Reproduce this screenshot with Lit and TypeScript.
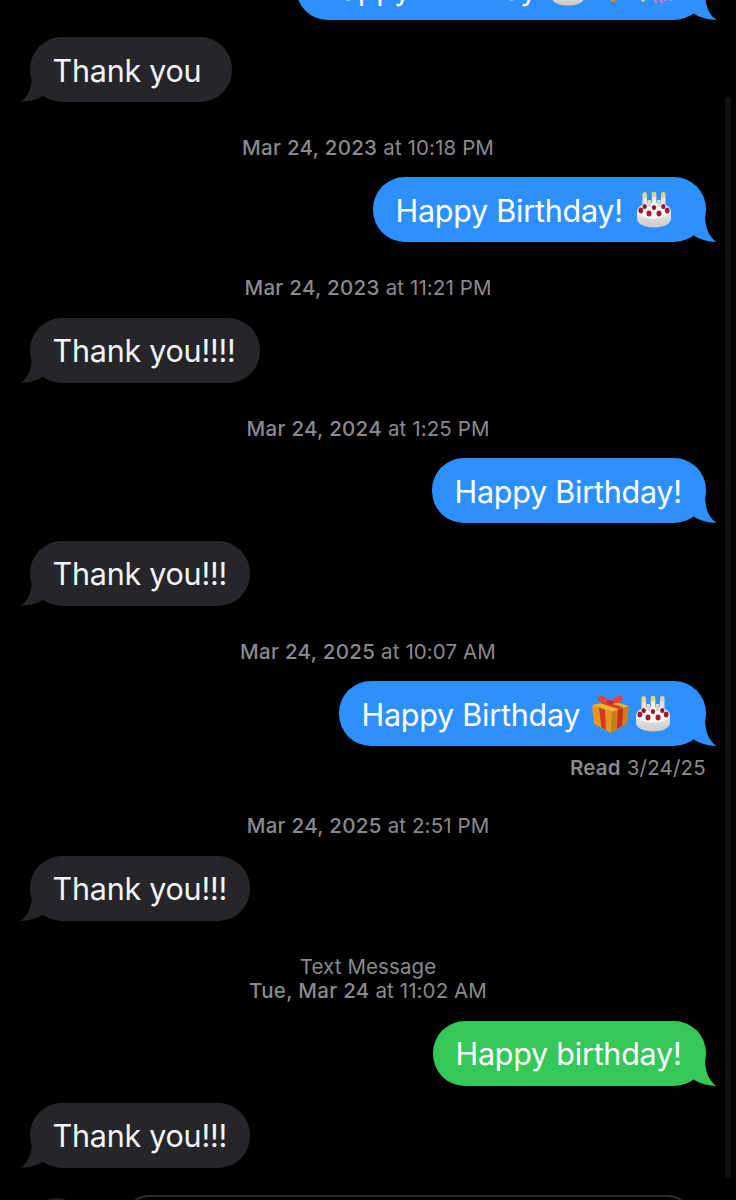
import { LitElement, html, css, svg } from "lit";
import { customElement } from "lit/decorators.js";

const cake = html`<svg class="emoji cake" viewBox="0 0 36 36" width="36" height="36">
  <defs>
    <linearGradient id="ck" x1="0" y1="0" x2="0" y2="1"><stop offset="0" stop-color="#fbf8f4"/><stop offset="1" stop-color="#cfcac5"/></linearGradient>
  </defs>
  <rect x="6.500" y="4" width="4.500" height="14" rx="1" fill="#e9e3da"/>
  <rect x="15.800" y="3" width="4.500" height="14" rx="1" fill="#f4efe8"/>
  <rect x="25" y="4" width="4.500" height="14" rx="1" fill="#e9e3da"/>
  <ellipse cx="8.700" cy="3" rx="2.300" ry="3" fill="#e3d27e"/>
  <ellipse cx="18" cy="2.400" rx="2.300" ry="2.800" fill="#e3d27e"/>
  <ellipse cx="27.300" cy="3" rx="2.300" ry="3" fill="#e3d27e"/>
  <path d="M1 20c0-6 7-9 17-9s17 3 17 9v6c0 6-7 9.500-17 9.500S1 32 1 26z" fill="url(#ck)"/>
  <ellipse cx="18" cy="19" rx="16.500" ry="7.500" fill="#fdfbf8"/>
  <rect x="11.500" y="8" width="3.500" height="7" fill="#ddd6cc"/><rect x="21" y="8" width="3.500" height="7" fill="#ddd6cc"/>
  <ellipse cx="4.800" cy="18.500" rx="2.400" ry="2.900" fill="#a01c36"/><ellipse cx="13" cy="21.500" rx="2.500" ry="3" fill="#a01c36"/><ellipse cx="23" cy="21.500" rx="2.500" ry="3" fill="#a01c36"/><ellipse cx="31.200" cy="18.500" rx="2.400" ry="2.900" fill="#a01c36"/>
  <ellipse cx="8.700" cy="14.500" rx="2.200" ry="2.600" fill="#8f1630"/><ellipse cx="18" cy="15.500" rx="2.200" ry="2.600" fill="#8f1630"/><ellipse cx="27.300" cy="14.500" rx="2.200" ry="2.600" fill="#8f1630"/>
</svg>`;

const gift = html`<svg class="emoji gift" viewBox="0 0 40 40" width="40" height="40">
  <path d="M2 11 21 7 39 12 22 18z" fill="#f0b52e"/>
  <path d="M2 11 22 18 21 39 4 30z" fill="#e39a1c"/>
  <path d="M22 18 39 12 37 30 21 39z" fill="#c97f14"/>
  <path d="M9 13.500 11.500 33.500 16 36 15 15.800z" fill="#d8352a"/>
  <path d="M28 15.200 33 13.500 32 32 27 35z" fill="#c92c22"/>
  <path d="M10 9 28 15 33 13 15 7.800z" fill="#e03a30"/>
  <path d="M20 8C15 1 8 0 8 4c0 4 6 6 12 5 6 1 13-1 13-5s-8-3-13 4z" fill="#e8423a"/>
  <path d="M16 8l4 4 5-4-5-2z" fill="#c92c22"/>
</svg>`;

const confetti = html`<svg class="emoji confetti" viewBox="0 0 36 36" width="36" height="36">
  <circle cx="18" cy="10" r="10" fill="#e8b83a"/>
  <path d="M3 29l0 1" stroke="#c9ef5a" stroke-width="3.500" stroke-linecap="round"/>
  <path d="M12 20l4 12M16 24l6 8" stroke="#f06fb8" stroke-width="2.200" stroke-linecap="round"/>
  <path d="M8 22l2 4" stroke="#8fd0ff" stroke-width="1.800" stroke-linecap="round"/>
  <path d="M25 22l0 8M31 24l0 6" stroke="#e887c8" stroke-width="1.800" stroke-linecap="round"/>
  <circle cx="29" cy="29" r="1.300" fill="#f4c95a"/>
</svg>`;

const tailPath = svg`<path d="M16 4C16 16 20 26 27.500 31C20 30.500 11 29 4 24L0 20L8 4Z" fill="currentColor"/>`;
const tail = (side: string) => html`<svg class="tail ${side}" viewBox="0 0 28 31" width="28" height="31">${tailPath}</svg>`;

type Row =
  | { k: "in"; t: string; w: number }
  | { k: "out"; t: string; w: number; c?: string; e?: unknown[]; cls?: string }
  | { k: "ts"; d: string; r: string; cls?: string }
  | { k: "two"; d: string; r: string }
  | { k: "read" };

const rows: Row[] = [
  { k: "out", t: "Happy Birthday", w: 410, e: [cake, gift, confetti], cls: "first" },
  { k: "in", t: "Thank you", w: 202 },
  { k: "ts", d: "Mar 24, 2023", r: "at 10:18 PM" },
  { k: "out", t: "Happy Birthday!", w: 333, e: [cake] },
  { k: "ts", d: "Mar 24, 2023", r: "at 11:21 PM" },
  { k: "in", t: "Thank you!!!!", w: 230 },
  { k: "ts", d: "Mar 24, 2024", r: "at 1:25 PM" },
  { k: "out", t: "Happy Birthday!", w: 274 },
  { k: "in", t: "Thank you!!!", w: 220 },
  { k: "ts", d: "Mar 24, 2025", r: "at 10:07 AM" },
  { k: "out", t: "Happy Birthday", w: 367, e: [gift, cake] },
  { k: "read" },
  { k: "ts", d: "Mar 24, 2025", r: "at 2:51 PM", cls: "after-read" },
  { k: "in", t: "Thank you!!!", w: 220 },
  { k: "two", d: "Tue, Mar 24", r: "at 11:02 AM" },
  { k: "out", t: "Happy birthday!", w: 273, c: "green" },
  { k: "in", t: "Thank you!!!", w: 220 },
];

@customElement("app-root")
export class AppRoot extends LitElement {
  static styles = css`
    :host { display: block; width: 736px; height: 1200px; overflow: hidden; background: #000; position: relative;
      font-family: Inter, "Liberation Sans", sans-serif; }
    .col { display: flex; flex-direction: column; }
    .bubble { position: relative; height: 65px; box-sizing: border-box; border-radius: 32px; display: flex; align-items: center;
      padding-left: 22.500px; padding-top: 1px; font-size: 30.5px; letter-spacing: -0.24px; color: #fff; white-space: nowrap; flex: none; }
    .in { align-self: flex-start; margin-left: 30px; background: #26262a; color: #f4f4f6; margin-top: 17.6px; }
    .out { align-self: flex-end; margin-right: 30px; background: #2e90ff; color: #fff; margin-top: 0; }
    .out.green { background: #35c759; }
    .in .tail { color: #26262a; }
    .out .tail { color: #2e90ff; }
    .out.green .tail { color: #35c759; }
    .first { margin-top: -45px; }
    .first + .in { margin-top: 17px; }
    .green + .in { margin-top: 17px; }
    .in + .out { margin-top: 17.6px; }
    .tail { position: absolute; bottom: 0; }
    .tail.r { right: -11px; }
    .tail.l { left: -10px; transform: scaleX(-1); }
    .emoji { flex: none; display: block; }
    .cake { margin-left: 13px; }
    .gift { margin-left: 10px; margin-right: -4px; }
    .gift + .cake { margin-left: 9px; }
    .first .gift { margin-left: 12px; margin-right: 0; width: 30px; height: 30px; }
    .first .confetti { margin-left: 12px; }
    .ts { height: 30px; margin: 30.6px 0 14.8px; display: flex; justify-content: center; align-items: center; gap: 6px;
      font-size: 20.5px; letter-spacing: 0.1px; color: #8a8a8e; white-space: nowrap; }
    .ts.after-read { margin: 32px 0 15px; }
    .ts b, .two b { font-weight: 500; letter-spacing: 0.3px; }
    .ts span, .two span { font-weight: 400; }
    .ts + .in { margin-top: 0; }
    .two { margin: 34px 0 18px; font-size: 20.5px; letter-spacing: 0.1px; color: #8a8a8e; line-height: 24px; text-align: center; white-space: nowrap; }
    .read { height: 22px; margin: 10.800px 30px 0 0; align-self: flex-end; font-size: 20.5px; color: #8a8a8e; letter-spacing: 0.2px; line-height: 22px; white-space: nowrap; }
    .read b { font-weight: 600; }
    .composer { display: flex; gap: 50px; margin-top: 27px; padding-left: 32px; flex: none; }
    .plus { width: 50px; height: 50px; border-radius: 50%; background: #1e1e20; margin-top: 3px; flex: none; }
    .input { width: 567px; height: 50px; box-sizing: border-box; border: 2px solid #2c2c2e; border-radius: 24px; flex: none; margin-left: -7px; }
    .scroll { position: absolute; left: 725px; top: 97px; width: 6px; height: 1081px; border-radius: 3px; background: #101010; }
  `;

  private row(r: Row) {
    switch (r.k) {
      case "in":
        return html`<div class="bubble in" style="width:${r.w}px">${r.t}${tail("l")}</div>`;
      case "out":
        return html`<div class="bubble out ${r.c ?? ""} ${r.cls ?? ""}" style="width:${r.w}px">
          <span>${r.t}</span>${r.e ?? ""}${tail("r")}</div>`;
      case "ts":
        return html`<div class="ts ${r.cls ?? ""}"><b>${r.d}</b><span>${r.r}</span></div>`;
      case "two":
        return html`<div class="two"><div><span>Text Message</span></div><div><b>${r.d}</b> <span>${r.r}</span></div></div>`;
      case "read":
        return html`<div class="read"><b>Read</b> 3/24/25</div>`;
    }
  }

  render() {
    return html`<div class="col">
      ${rows.map((r) => this.row(r))}
      <div class="composer"><div class="plus"></div><div class="input"></div></div>
    </div>
    <div class="scroll"></div>`;
  }
}
